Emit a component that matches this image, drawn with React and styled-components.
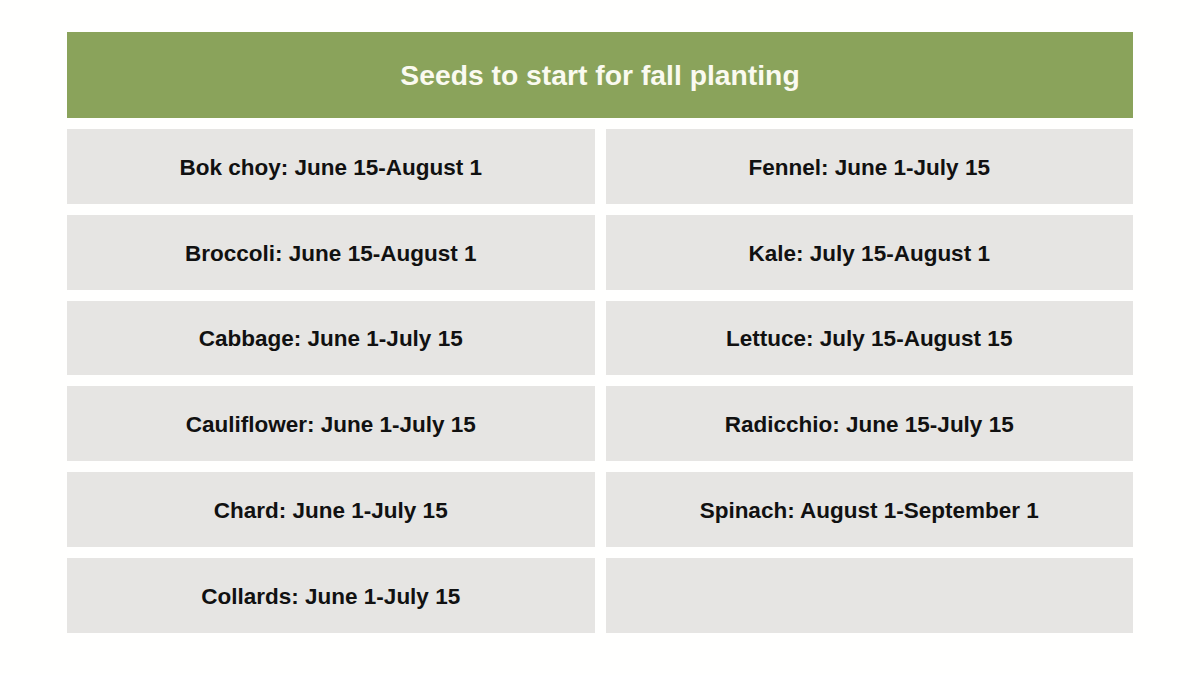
import React from 'react';
import styled, { createGlobalStyle } from 'styled-components';

const GlobalStyle = createGlobalStyle`
  html, body {
    margin: 0;
    padding: 0;
    background: #ffffff;
  }
  body {
    font-family: "Liberation Sans", Arial, sans-serif;
  }
`;

const Page = styled.div`
  width: 1200px;
  height: 675px;
  padding: 32px 67px 0 67px;
  box-sizing: border-box;
  background: #fffffe;
`;

const Header = styled.div`
  height: 86px;
  background: #8aa35b;
  color: #fafaf0;
  display: flex;
  align-items: center;
  justify-content: center;
  font-size: 28.3px;
  font-weight: 700;
`;

const Grid = styled.div`
  margin-top: 11px;
  display: grid;
  grid-template-columns: 1fr 1fr;
  grid-auto-rows: 74.8px;
  gap: 11px;
`;

const Cell = styled.div`
  background: #e6e5e3;
  color: #111;
  display: flex;
  align-items: center;
  justify-content: center;
  padding-top: 3px;
  box-sizing: border-box;
  font-size: 22.5px;
  font-weight: 700;
`;

const left = [
  'Bok choy: June 15-August 1',
  'Broccoli: June 15-August 1',
  'Cabbage: June 1-July 15',
  'Cauliflower: June 1-July 15',
  'Chard: June 1-July 15',
  'Collards: June 1-July 15',
];

const right = [
  'Fennel: June 1-July 15',
  'Kale: July 15-August 1',
  'Lettuce: July 15-August 15',
  'Radicchio: June 15-July 15',
  'Spinach: August 1-September 1',
  '',
];

export default function App() {
  return (
    <>
      <GlobalStyle />
      <Page>
        <Header>Seeds to start for fall planting</Header>
        <Grid>
          {left.map((item, i) => (
            <React.Fragment key={i}>
              <Cell>{item}</Cell>
              <Cell>{right[i]}</Cell>
            </React.Fragment>
          ))}
        </Grid>
      </Page>
    </>
  );
}
